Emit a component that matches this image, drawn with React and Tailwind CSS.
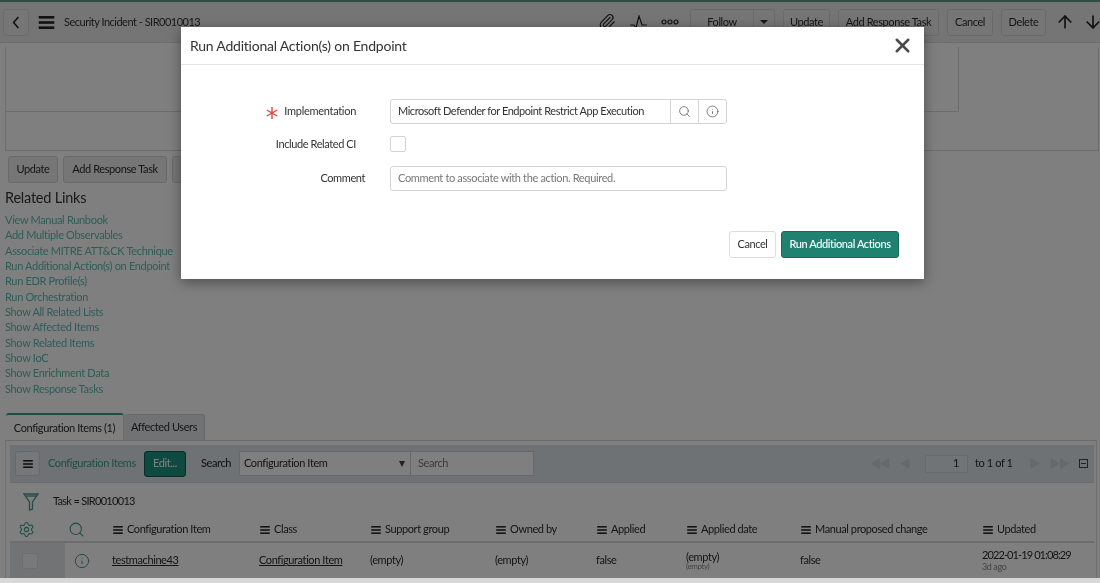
import { Search, Info, X, Paperclip, ArrowUp, ArrowDown, Settings } from "lucide-react";

const links = [
  "View Manual Runbook",
  "Add Multiple Observables",
  "Associate MITRE ATT&CK Technique",
  "Run Additional Action(s) on Endpoint",
  "Run EDR Profile(s)",
  "Run Orchestration",
  "Show All Related Lists",
  "Show Affected Items",
  "Show Related Items",
  "Show IoC",
  "Show Enrichment Data",
  "Show Response Tasks",
];

const columns = ["Configuration Item", "Class", "Support group", "Owned by", "Applied", "Applied date", "Manual proposed change", "Updated"];

const gridCols = "grid grid-cols-[55px_47px_147px_111px_125px_101px_90px_114px_182px_1fr]";

// three bars, used in the header and before every column title
function Bars({ className }) {
  return (
    <svg viewBox="0 0 12 10" className={className} fill="currentColor">
      <rect x="0" y="0" width="12" height="2" />
      <rect x="0" y="4" width="12" height="2" />
      <rect x="0" y="8" width="12" height="2" />
    </svg>
  );
}

function Btn({ children, className = "" }) {
  return (
    <button className={`h-[27px] shrink-0 whitespace-nowrap rounded-[3px] border border-[#d5d5d5] bg-[#ededed] text-[11px] text-[#2b2b2b] ${className}`}>
      {children}
    </button>
  );
}

function Triangle({ left, double }) {
  return (
    <svg viewBox={double ? "0 0 20 12" : "0 0 10 12"} className={double ? "h-[11px] w-[20px] text-[#cdd1d5]" : "h-[11px] w-[10px] text-[#cdd1d5]"} fill="currentColor">
      {left ? (
        <>
          <path d="M10 0v12L0 6z" />
          {double && <path d="M20 0v12L10 6z" />}
        </>
      ) : (
        <>
          <path d="M0 0v12l10-6z" />
          {double && <path d="M10 0v12l10-6z" />}
        </>
      )}
    </svg>
  );
}

function Header() {
  return (
    <div className="flex h-[43px] items-center border-t-2 border-b border-t-[#5f9a80] border-b-[#dcdcdc] bg-[#ebebeb] pl-[3px] text-[#222]">
      <button className="flex h-[27px] w-[26px] shrink-0 items-center justify-center rounded-[3px] border border-[#d8d8d8] bg-[#ededed]">
        <svg viewBox="0 0 10 16" className="h-[13px] w-[8px]" fill="none" stroke="currentColor" strokeWidth="2">
          <path d="M8 1 2 8l6 7" />
        </svg>
      </button>
      <Bars className="ml-[9px] h-[13px] w-[17px] shrink-0" />
      <span className="ml-[9px] w-[136px] shrink-0 whitespace-nowrap text-[11px] tracking-[-0.5px] text-[#333]">Security Incident - SIR0010013</span>
      <Paperclip className="ml-[398px] h-[18px] w-[18px] shrink-0" strokeWidth={1.5} />
      <svg viewBox="0 0 18 14" className="ml-[14px] h-[14px] w-[18px] shrink-0" fill="none" stroke="currentColor" strokeWidth="1.2">
        <path d="M0 10h4l2 3 3-12 3 9h5" />
      </svg>
      <svg viewBox="0 0 18 6" className="ml-[13px] h-[6px] w-[18px] shrink-0" fill="none" stroke="currentColor" strokeWidth="1.2">
        <circle cx="3" cy="3" r="2" />
        <circle cx="9" cy="3" r="2" />
        <circle cx="15" cy="3" r="2" />
      </svg>
      <div className="ml-[11px] flex shrink-0">
        <Btn className="w-[64px] rounded-r-none">Follow</Btn>
        <Btn className="flex w-[21px] items-center justify-center rounded-l-none border-l-0">
          <span className="h-0 w-0 border-x-[4px] border-t-[4px] border-x-transparent border-t-[#333]" />
        </Btn>
      </div>
      <Btn className="ml-[8px] w-[47px]">Update</Btn>
      <Btn className="ml-[8px] w-[101px]">Add Response Task</Btn>
      <Btn className="ml-[8px] w-[46px]">Cancel</Btn>
      <Btn className="ml-[8px] w-[45px]">Delete</Btn>
      <ArrowUp className="ml-[9px] h-[20px] w-[20px] shrink-0" strokeWidth={2} />
      <ArrowDown className="ml-[8px] h-[20px] w-[20px] shrink-0" strokeWidth={2} />
    </div>
  );
}

function ConfigTable() {
  return (
    <div className="ml-[5px] mr-[3px] mt-[18px] text-[#2b2b2b]">
      <div className="flex h-[27px] items-end border-b border-[#d9d9d9] pl-px">
        <div className="flex h-[27px] w-[118px] items-center justify-center rounded-t-[3px] border-t-2 border-r border-t-[#3f9c8a] border-r-[#d9d9d9] bg-white pt-[1px] text-[11px]">
          Configuration Items (1)
        </div>
        <div className="flex h-[26px] w-[81px] items-center justify-center rounded-t-[3px] border-t border-r border-[#d0d0d0] bg-[#e3e5e7] text-[11px]">
          Affected Users
        </div>
      </div>
      <div className="border-x border-[#e0e0e0] pl-[4px] pr-[2px] pt-[4px]">
        <div className="flex h-[38px] items-center border-b border-[#d5d7d9] bg-[#dee4e8] pl-[5px]">
          <button className="flex h-[25px] w-[25px] items-center justify-center rounded-[3px] border border-[#d0d0d0] bg-[#eceef0]">
            <Bars className="h-[8px] w-[10px] text-[#222]" />
          </button>
          <span className="ml-[8px] w-[89px] whitespace-nowrap text-[11px] text-[#3f9c8a]">Configuration Items</span>
          <button className="ml-[7px] h-[26px] w-[42px] rounded-[3px] border border-[#155c50] bg-[#1e9482] text-[11px] text-white">Edit...</button>
          <span className="ml-[15px] w-[30px] text-[11px] font-medium">Search</span>
          <div className="ml-[8px] flex h-[25px] w-[172px] items-center justify-between border border-[#d0d3d6] bg-white pl-[4px] pr-[5px] text-[11px]">
            Configuration Item
            <span className="h-0 w-0 border-x-[3.5px] border-t-[6px] border-x-transparent border-t-[#444]" />
          </div>
          <div className="flex h-[25px] w-[123px] items-center border border-l-0 border-[#d0d3d6] bg-white pl-[7px] text-[11px] text-[#777]">Search</div>
          <div className="ml-auto flex items-center pr-[6px]">
            <Triangle left double />
            <span className="ml-[10px]"><Triangle left /></span>
            <div className="ml-[15px] flex h-[18px] w-[43px] items-center justify-end rounded-[2px] border border-[#cfd2d5] bg-[#e4e6e8] pr-[8px] text-[11px]">1</div>
            <span className="ml-[7px] w-[38px] whitespace-nowrap text-[11px]">to 1 of 1</span>
            <span className="ml-[17px]"><Triangle /></span>
            <span className="ml-[10px]"><Triangle double /></span>
            <span className="ml-[9px] flex h-[9px] w-[9px] items-center justify-center border border-[#444]">
              <span className="h-px w-[5px] bg-[#444]" />
            </span>
          </div>
        </div>
        <div className="flex h-[36px] items-center pt-[1px]">
          <svg viewBox="0 0 16 18" className="ml-[13px] h-[18px] w-[16px] text-[#3f9c8a]" fill="none" stroke="currentColor" strokeWidth="1.3">
            <path d="M1 1h14L9.5 9v7l-3 1V9z" />
            <path d="M3 3h10" />
          </svg>
          <span className="ml-[14px] text-[11px] tracking-[-0.7px]">Task = SIR0010013</span>
        </div>
        <div className={`${gridCols} h-[24px] items-center border-b-2 border-[#dadada] pb-[1px] text-[11px]`}>
          <Settings className="ml-[8px] h-[17px] w-[17px] text-[#3f9c8a]" strokeWidth={1.5} />
          <Search className="ml-[3px] h-[17px] w-[17px] text-[#3f9c8a]" strokeWidth={1.5} />
          {columns.map((name) => (
            <div key={name} className="ml-px flex items-center gap-[4px]">
              <Bars className="h-[8px] w-[10px] shrink-0" />
              <span className="whitespace-nowrap">{name}</span>
            </div>
          ))}
        </div>
        <div className={`${gridCols} h-[35px] items-center text-[11px]`}>
          <div className="flex h-full items-center bg-[#e4e6e8] pl-[12px]">
            <span className="h-[16px] w-[16px] rounded-[2px] border border-[#dcdcdc] bg-[#f2f2f2]" />
          </div>
          <Info className="ml-[9px] h-[16px] w-[16px] text-[#3f9c8a]" strokeWidth={1.5} />
          <span className="underline">testmachine43</span>
          <span className="underline">Configuration Item</span>
          <span>(empty)</span>
          <span>(empty)</span>
          <span>false</span>
          <div className="flex flex-col leading-[11px]">
            <span>(empty)</span>
            <span className="text-[8px] leading-[9px] text-[#888]">(empty)</span>
          </div>
          <span>false</span>
          <div className="flex flex-col whitespace-nowrap leading-[12px]">
            <span className="tracking-[-0.9px]">2022-01-19 01:08:29</span>
            <span className="text-[9px] leading-[11px] text-[#888]">3d ago</span>
          </div>
        </div>
      </div>
    </div>
  );
}

function Modal() {
  return (
    <div className="h-[252px] w-[743px] bg-white shadow-[0_3px_12px_rgba(0,0,0,0.4)]">
      <div className="flex h-[38px] items-center justify-between border-b border-[#e3e3e3] pl-[9px] pr-[10px]">
        <h2 className="text-[14px] tracking-[-0.22px] text-[#333]">Run Additional Action(s) on Endpoint</h2>
        <X className="h-[23px] w-[23px] text-[#4a4a4a]" strokeWidth={2.6} />
      </div>
      <div className="px-[9px] pt-[34px]">
        <div className="flex items-center">
          <div className="flex w-[166px] items-center justify-end text-[11px] tracking-[-0.3px] text-[#333]">
            <svg viewBox="0 0 12 12" className="mr-[6px] mt-[3px] h-[12px] w-[12px] text-[#e0483e]" fill="none" stroke="currentColor" strokeWidth="1.4">
              <path d="M6 0v12M.8 3l10.4 6M.8 9l10.4-6" />
            </svg>
            Implementation
          </div>
          <div className="ml-[34px] flex h-[25px] w-[337px] rounded-[3px] border border-[#d4d4d4] text-[11px] tracking-[-0.45px] text-[#333]">
            <div className="flex flex-1 items-center whitespace-nowrap pl-[7px]">Microsoft Defender for Endpoint Restrict App Execution</div>
            <div className="flex w-[28px] items-center justify-center border-l border-[#d4d4d4]">
              <Search className="h-[13px] w-[13px] text-[#666]" strokeWidth={1.5} />
            </div>
            <div className="flex w-[28px] items-center justify-center border-l border-[#d4d4d4]">
              <Info className="h-[13px] w-[13px] text-[#666]" strokeWidth={1.5} />
            </div>
          </div>
        </div>
        <div className="mt-[12px] flex items-center">
          <div className="w-[166px] text-right text-[11px] text-[#333]">Include Related CI</div>
          <span className="ml-[34px] h-[16px] w-[16px] rounded-[2px] border border-[#d4d4d4]" />
        </div>
        <div className="mt-[13px] flex items-center">
          <div className="w-[175px] text-right text-[11px] text-[#333]">Comment</div>
          <div className="ml-[25px] flex h-[25px] w-[337px] items-center rounded-[3px] border border-[#d4d4d4] pl-[7px] text-[11px] tracking-[-0.35px] text-[#777]">
            Comment to associate with the action. Required.
          </div>
        </div>
        <div className="mt-[40px] flex justify-end gap-[5px] pr-[16px]">
          <button className="h-[27px] w-[47px] rounded-[3px] border border-[#dcdcdc] bg-white text-[11px] text-[#333]">Cancel</button>
          <button className="h-[27px] w-[118px] rounded-[3px] border border-[#17695b] bg-[#1f8271] text-[11px] font-medium text-white">Run Additional Actions</button>
        </div>
      </div>
    </div>
  );
}

export default function App() {
  return (
    <div className="relative h-[583px] w-[1100px] overflow-hidden bg-[#d8d8d8] font-['Lato','Noto_Sans',sans-serif] tracking-[-0.4px] blur-[0.35px]">
      <div className="h-[578px] overflow-hidden bg-white">
        <Header />
        <div className="mx-[5px] mt-[4px] h-[104px] w-[1094px] border-x border-b border-[#d9d9d9]">
          <div className="h-[65px] w-[953px] rounded-br-[2px] border-r border-b border-[#d9d9d9]" />
        </div>
        <div className="ml-[8px] mt-[5px] flex gap-[5px]">
          <Btn className="w-[50px]">Update</Btn>
          <Btn className="w-[104px]">Add Response Task</Btn>
          <Btn className="w-[50px]" />
        </div>
        <div className="ml-[5px] mt-[5px] text-[14.5px] leading-[20px] tracking-[-0.22px] text-[#333]">Related Links</div>
        <ul className="ml-[5px] mt-[4px] text-[11px] leading-[15.35px] tracking-[-0.32px] text-[#5bbcaa]">
          {links.map((link) => (
            <li key={link}>{link}</li>
          ))}
        </ul>
        <ConfigTable />
      </div>
      <div className="absolute inset-x-0 top-0 flex h-[578px] justify-center bg-black/50 pl-[5px] pt-[27px]">
        <Modal />
      </div>
    </div>
  );
}
